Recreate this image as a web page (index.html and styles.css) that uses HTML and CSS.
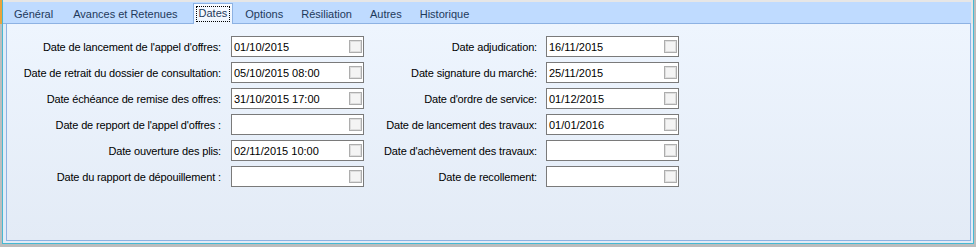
FILE: index.html
```html
<!DOCTYPE html>
<html lang="fr">
<head>
  <meta charset="UTF-8">
  <title>Marché - Dates</title>
  <link rel="stylesheet" href="styles.css">
</head>
<body>

  <div class="frame">
    <div class="tabs">
      <div class="tab first">Général</div>
      <div class="tab second">Avances et Retenues</div>
      <div class="tab active"><span>Dates</span></div>
      <div class="tab">Options</div>
      <div class="tab">Résiliation</div>
      <div class="tab">Autres</div>
      <div class="tab">Historique</div>
    </div>

    <div class="panel">
      <div class="form">
        <!-- row 1 -->
        <label class="lbl">Date de lancement de l'appel d'offres:</label>
        <div class="date"><span>01/10/2015</span><i class="chk"></i></div>
        <label class="lbl right">Date adjudication:</label>
        <div class="date"><span>16/11/2015</span><i class="chk"></i></div>

        <!-- row 2 -->
        <label class="lbl">Date de retrait du dossier de consultation:</label>
        <div class="date"><span>05/10/2015 08:00</span><i class="chk"></i></div>
        <label class="lbl right">Date signature du marché:</label>
        <div class="date"><span>25/11/2015</span><i class="chk"></i></div>

        <!-- row 3 -->
        <label class="lbl">Date échéance de remise des offres:</label>
        <div class="date"><span>31/10/2015 17:00</span><i class="chk"></i></div>
        <label class="lbl right">Date d'ordre de service:</label>
        <div class="date"><span>01/12/2015</span><i class="chk"></i></div>

        <!-- row 4 -->
        <label class="lbl">Date de repport de l'appel d'offres :</label>
        <div class="date"><span></span><i class="chk"></i></div>
        <label class="lbl right">Date de lancement des travaux:</label>
        <div class="date"><span>01/01/2016</span><i class="chk"></i></div>

        <!-- row 5 -->
        <label class="lbl">Date ouverture des plis:</label>
        <div class="date"><span>02/11/2015 10:00</span><i class="chk"></i></div>
        <label class="lbl right">Date d'achèvement des travaux:</label>
        <div class="date"><span></span><i class="chk"></i></div>

        <!-- row 6 -->
        <label class="lbl">Date du rapport de dépouillement :</label>
        <div class="date"><span></span><i class="chk"></i></div>
        <label class="lbl right">Date de recollement:</label>
        <div class="date"><span></span><i class="chk"></i></div>
      </div>
    </div>
  </div>

</body>
</html>
```

FILE: styles.css
```css
body {
  margin: 0;
  padding: 0;
  width: 976px;
  height: 247px;
  overflow: hidden;
  font-family: "Liberation Sans", Arial, sans-serif;
  font-size: 11px;
  color: #000;
  background: linear-gradient(#e9a43c, #e9a43c) 0 0 / 2px 24px no-repeat, #bdbdbd;
}

.frame {
  margin-left: 2px;
  width: 972px;
  height: 244px;
  box-sizing: border-box;
  border: 1px solid #45b9d3;
  border-top: none;
  padding: 2px 2px 0 0;
  background: linear-gradient(#e6e6e6 24px, #e3ebf6 24px);
}

/* tab strip */
.tabs {
  display: flex;
  height: 21px;
  background: #bfdbff;
  border-bottom: 1px solid #8db2e3;
  color: #1e395b;
}

.tab {
  padding: 6px 9px 0;
  line-height: 13px;
  white-space: nowrap;
}

.tab.first {
  margin-left: 2px;
}

.tab.second {
  margin-left: 2px;
}

.tab.active {
  margin: 1px 3px -1px 6px;
  padding: 3px 3px 0;
  border: 1px solid #8db2e3;
  border-bottom: none;
  background: linear-gradient(#f7faff, #eef5fe);
}

.tab.active span {
  display: inline-block;
  padding: 0 2px 1px;
  outline: 1px dotted #000;
}

/* page */
.panel {
  margin-left: 3px;
  height: 217px;
  box-sizing: border-box;
  border: 1px solid #8db2e3;
  border-top: none;
  background: linear-gradient(#eef5fe, #e3ebf6);
  padding-top: 12px;
}

.form {
  display: grid;
  grid-template-columns: 224px 133px 182px 133px;
  grid-auto-rows: 21px;
  row-gap: 5px;
}

.lbl {
  align-self: center;
  text-align: right;
  padding-right: 10px;
  letter-spacing: -0.15px;
  white-space: nowrap;
}

.lbl.right {
  padding-right: 9px;
}

.date {
  display: flex;
  align-items: center;
  justify-content: space-between;
  box-sizing: border-box;
  height: 21px;
  border: 1px solid #7a7a7a;
  background: #fff;
  padding-left: 2px;
  white-space: nowrap;
}

.chk {
  width: 13px;
  height: 13px;
  box-sizing: border-box;
  margin-right: 1px;
  border: 1px solid #adadad;
  box-shadow: inset 0 0 0 1px #dedede;
  background: #f4f4f4;
}
```
